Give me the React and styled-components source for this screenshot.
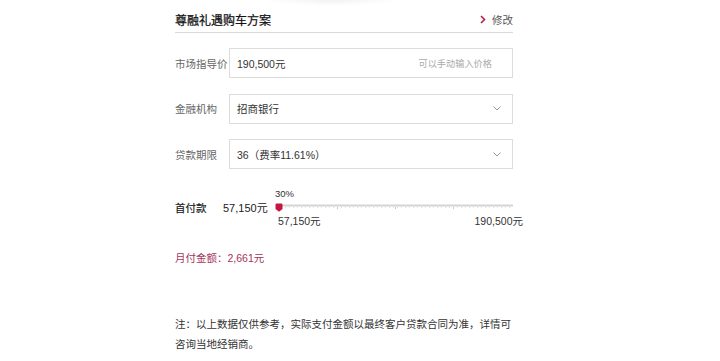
import React from "react";
import styled, { createGlobalStyle } from "styled-components";

const Global = createGlobalStyle`
  html, body { margin: 0; padding: 0; background: #fff; }
  body {
    font-family: "Liberation Sans", "Noto Sans CJK SC", sans-serif;
    color: #333;
  }
`;

const Page = styled.div`
  width: 720px;
  min-height: 361px;
  overflow: hidden;
`;

const TopShade = styled.div`
  height: 6px;
  width: 140px;
  margin-left: 262px;
  background: radial-gradient(ellipse at 50% 0%, rgba(0, 0, 0, 0.05), rgba(0, 0, 0, 0) 70%);
`;

const Panel = styled.div`
  width: 338px;
  margin-left: 175px;
`;

const Header = styled.div`
  height: 26px;
  display: flex;
  align-items: center;
  justify-content: space-between;
  border-bottom: 1px solid #d9d9d9;
`;

const Title = styled.div`
  font-size: 12px;
  font-weight: 400;
  color: #111;
  -webkit-text-stroke: 0.25px #111;
`;

const EditLink = styled.div`
  display: flex;
  align-items: center;
  gap: 6px;
  font-size: 10.5px;
  color: #555;
`;

const Form = styled.div`
  display: flex;
  flex-direction: column;
  gap: 15.5px;
  margin-top: 15px;
`;

const Row = styled.div`
  display: flex;
  align-items: center;
`;

const Label = styled.div`
  width: 54px;
  flex: none;
  font-size: 10.5px;
  color: #666;
`;

const Field = styled.div`
  flex: 1;
  height: 30px;
  box-sizing: border-box;
  border: 1px solid #dcdcdc;
  display: flex;
  align-items: center;
  justify-content: space-between;
  padding: 0 11px 0 7px;
  font-size: 10.5px;
  color: #333;
`;

const Hint = styled.span`
  font-size: 9.2px;
  color: #aaa;
  margin-right: 9px;
`;

const SliderRow = styled.div`
  display: flex;
  align-items: center;
  margin-top: 18px;
`;

const DownLabel = styled.div`
  width: 48px;
  flex: none;
  font-size: 10.5px;
  color: #222;
  -webkit-text-stroke: 0.2px #222;
`;

const Amount = styled.div`
  width: 52px;
  flex: none;
  font-size: 11px;
  color: #222;
`;

const SliderCol = styled.div`
  flex: 1;
  display: flex;
  flex-direction: column;
`;

const Percent = styled.div`
  height: 14px;
  line-height: 14px;
  font-size: 9.5px;
  color: #333;
`;

const Track = styled.div`
  height: 12px;
  position: relative;
  display: flex;
  align-items: center;
`;

const Thumb = styled.svg`
  position: absolute;
  left: 0;
  top: 2px;
`;

const Ends = styled.div`
  height: 14px;
  display: flex;
  justify-content: space-between;
  align-items: center;
  font-size: 10.5px;
  color: #333;
  padding-left: 3px;
  margin-right: -10px;
`;

const Monthly = styled.div`
  margin-top: 23px;
  line-height: 16px;
  font-size: 10.5px;
  color: #a33458;
`;

const Note = styled.p`
  margin: 48px 0 0;
  font-size: 10.5px;
  line-height: 20px;
  color: #333;
`;

const Chevron = ({ color = "#999", w = 8, h = 5, sw = 1 }) => (
  <svg width={w} height={h} viewBox="0 0 8 5">
    <path d="M0.5 0.5 L4 4 L7.5 0.5" fill="none" stroke={color} strokeWidth={sw} />
  </svg>
);

const TrackLine = () => {
  const ticks = [];
  for (let x = 6; x < 236; x += 4) {
    ticks.push(<rect key={"m" + x} x={x} y={3} width={1} height={1} fill="#e0e0e0" />);
  }
  for (let x = 62; x < 236; x += 58) {
    ticks.push(<rect key={"M" + x} x={x} y={3} width={1} height={2} fill="#c8c8c8" />);
  }
  return (
    <svg width="238" height="7" viewBox="0 0 238 7" style={{ display: "block" }}>
      <rect x="4" y="0.5" width="234" height="2" fill="#d4d4d4" />
      {ticks}
    </svg>
  );
};

export default function App() {
  return (
    <Page>
      <Global />
      <TopShade />
      <Panel>
        <Header>
          <Title>尊融礼遇购车方案</Title>
          <EditLink>
            <svg width="6" height="9" viewBox="0 0 6 9">
              <path d="M1 1 L4.5 4.5 L1 8" fill="none" stroke="#b3244d" strokeWidth="1.6" />
            </svg>
            修改
          </EditLink>
        </Header>
        <Form>
          <Row>
            <Label>市场指导价</Label>
            <Field>
              <span>190,500元</span>
              <Hint>可以手动输入价格</Hint>
            </Field>
          </Row>
          <Row>
            <Label>金融机构</Label>
            <Field>
              <span>招商银行</span>
              <Chevron />
            </Field>
          </Row>
          <Row>
            <Label>贷款期限</Label>
            <Field>
              <span>36（费率11.61%）</span>
              <Chevron />
            </Field>
          </Row>
        </Form>
        <SliderRow>
          <DownLabel>首付款</DownLabel>
          <Amount>57,150元</Amount>
          <SliderCol>
            <Percent>30%</Percent>
            <Track>
              <TrackLine />
              <Thumb width="8" height="9" viewBox="0 0 8 9">
                <path d="M0.5 1.8 Q0.5 0.5 1.8 0.5 H6.2 Q7.5 0.5 7.5 1.8 V6 L4 8.7 L0.5 6 Z" fill="#c4143f" />
              </Thumb>
            </Track>
            <Ends>
              <span>57,150元</span>
              <span>190,500元</span>
            </Ends>
          </SliderCol>
        </SliderRow>
        <Monthly>月付金额：2,661元</Monthly>
        <Note>注：以上数据仅供参考，实际支付金额以最终客户贷款合同为准，详情可咨询当地经销商。</Note>
      </Panel>
    </Page>
  );
}
